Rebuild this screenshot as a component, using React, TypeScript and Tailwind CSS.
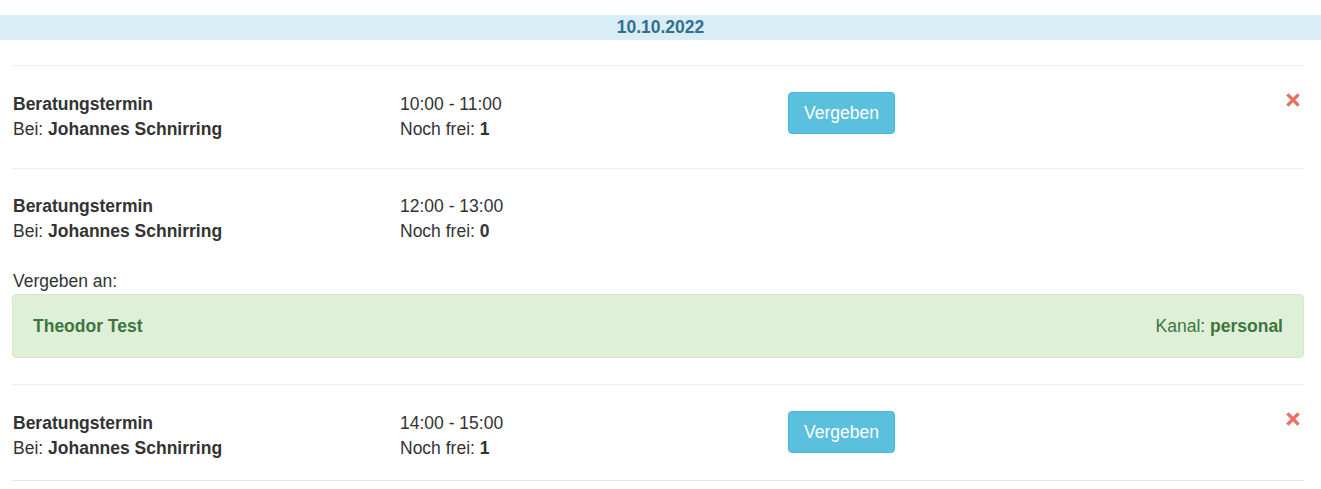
import React from 'react';

type Slot = {
  time: string;
  free: number;
  pad: string;
  assigned?: { name: string; channel: string };
};

const slots: Slot[] = [
  { time: '10:00 - 11:00', free: 1, pad: 'pt-[26px] pb-[26px]' },
  { time: '12:00 - 13:00', free: 0, pad: 'pt-[25px] pb-[26px]', assigned: { name: 'Theodor Test', channel: 'personal' } },
  { time: '14:00 - 15:00', free: 1, pad: 'pt-[26px] pb-[19px]' },
];

function RemoveIcon() {
  return (
    <svg width="14" height="14" viewBox="0 0 14 14" className="block">
      <path d="M2.5 2.5 L11.5 11.5 M11.5 2.5 L2.5 11.5" stroke="#e8705f" strokeWidth="3.2" strokeLinecap="square" />
    </svg>
  );
}

function SlotRow({ slot }: { slot: Slot }) {
  return (
    <div className={`border-t border-[#eeeeee] pl-[1px] ${slot.pad}`}>
      <div className="flex items-start">
        <div className="w-[387px] shrink-0">
          <div className="font-bold">Beratungstermin</div>
          <div>
            Bei: <span className="font-bold">Johannes Schnirring</span>
          </div>
        </div>
        <div className="w-[388px] shrink-0">
          <div>{slot.time}</div>
          <div>
            Noch frei: <span className="font-bold">{slot.free}</span>
          </div>
        </div>
        <div className="flex-1">
          {slot.free > 0 && (
            <button className="h-[42px] px-[15px] rounded-[4px] bg-[#5bc0de] border border-[#46b8da] text-white">
              Vergeben
            </button>
          )}
        </div>
        {slot.free > 0 && (
          <div className="pt-[1px] pr-[4px]">
            <RemoveIcon />
          </div>
        )}
      </div>
      {slot.assigned && (
        <div className="mt-[25px] -ml-[1px]">
          <div className="pl-[1px]">Vergeben an:</div>
          <div className="h-[64px] flex items-center justify-between px-[20px] rounded-[4px] bg-[#dff0d8] border border-[#d6e9c6] text-[#3c763d]">
            <span className="font-bold">{slot.assigned.name}</span>
            <span>
              Kanal: <span className="font-bold">{slot.assigned.channel}</span>
            </span>
          </div>
        </div>
      )}
    </div>
  );
}

export default function App() {
  return (
    <div className="w-[1321px] h-[489px] bg-white text-[#333333] text-[17.5px] leading-[25px] font-['Liberation_Sans',Arial,sans-serif] pt-[15px] overflow-hidden">
      <div className="h-[25px] bg-[#d9edf7] text-[#31708f] font-bold text-center leading-[25px]">10.10.2022</div>
      <div className="mx-[12px] mt-[25px] w-[1292px] border-b border-[#e5e5e5]">
        {slots.map((s, i) => (
          <SlotRow key={i} slot={s} />
        ))}
      </div>
    </div>
  );
}
